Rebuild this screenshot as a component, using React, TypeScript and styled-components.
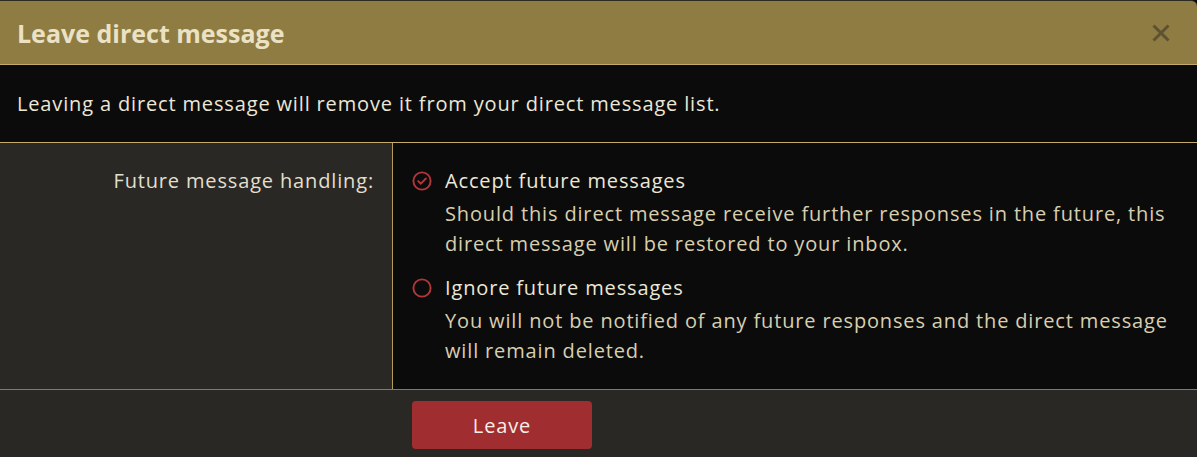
import React, { useState } from 'react';
import styled, { createGlobalStyle } from 'styled-components';

const colors = {
  header: '#8f7c42',
  headerText: '#ebe2c6',
  closeIcon: '#5e5232',
  goldLine: '#c4ab6a',
  goldDark: '#8f7b45',
  black: '#0b0b0b',
  panel: '#292824',
  text: '#ece7d6',
  muted: '#d8cfb0',
  red: '#b3363a',
  button: '#a02d30',
};

const GlobalStyle = createGlobalStyle`
  html, body {
    margin: 0;
    padding: 0;
    background: ${colors.panel};
  }
  body {
    font-family: 'Open Sans', 'Noto Sans', sans-serif;
  }
`;

type Option = {
  id: string;
  label: string;
  description: string;
};

const options: Option[] = [
  {
    id: 'accept',
    label: 'Accept future messages',
    description:
      'Should this direct message receive further responses in the future, this direct message will be restored to your inbox.',
  },
  {
    id: 'ignore',
    label: 'Ignore future messages',
    description:
      'You will not be notified of any future responses and the direct message will remain deleted.',
  },
];

const RadioIcon = ({ checked }: { checked: boolean }) => (
  <svg width='20' height='20' viewBox='0 0 20 20' fill='none'>
    <circle cx='10' cy='10' r='8.6' stroke={colors.red} strokeWidth='1.9' />
    {/* checkmark only on the selected option */}
    {checked && (
      <path
        d='M6.2 10.1 L8.9 12.7 L13.9 7.5'
        stroke={colors.red}
        strokeWidth='1.9'
        strokeLinecap='round'
        strokeLinejoin='round'
      />
    )}
  </svg>
);

export default function App() {
  const [selected, setSelected] = useState('accept');

  return (
    <>
      <GlobalStyle />
      <Modal>
        <Header>
          <Title>Leave direct message</Title>
          <CloseButton aria-label='Close'>
            <svg width='18' height='18' viewBox='0 0 18 18'>
              <path d='M1.5 1.5 L16.5 16.5 M16.5 1.5 L1.5 16.5' stroke={colors.closeIcon} strokeWidth='3' />
            </svg>
          </CloseButton>
        </Header>

        <Intro>Leaving a direct message will remove it from your direct message list.</Intro>

        <FormRow>
          <FieldLabel>Future message handling:</FieldLabel>
          <FieldBody>
            {options.map((opt) => (
              <OptionRow key={opt.id} onClick={() => setSelected(opt.id)}>
                <IconWrap>
                  <RadioIcon checked={selected === opt.id} />
                </IconWrap>
                <OptionText>
                  <OptionLabel>{opt.label}</OptionLabel>
                  <OptionDescription>{opt.description}</OptionDescription>
                </OptionText>
              </OptionRow>
            ))}
          </FieldBody>
        </FormRow>

        <Footer>
          <span />
          <ButtonCell>
            <LeaveButton type='button'>Leave</LeaveButton>
          </ButtonCell>
        </Footer>
      </Modal>
    </>
  );
}

const Modal = styled.section`
  width: 1197px;
  background: ${colors.black};
  color: ${colors.text};
  letter-spacing: 0.85px;
`;

const Header = styled.header`
  height: 65px;
  box-sizing: border-box;
  border-top: 1px solid #2d2a22;
  border-bottom: 1px solid ${colors.goldLine};
  border-radius: 0 6px 0 0;
  background: ${colors.header};
  display: flex;
  align-items: center;
  justify-content: space-between;
  padding: 0 27px 0 17px;
`;

const Title = styled.h1`
  margin: 0;
  font-size: 25px;
  font-weight: 700;
  letter-spacing: 0;
  color: ${colors.headerText};
`;

const CloseButton = styled.button`
  border: none;
  background: transparent;
  padding: 0;
  display: flex;
  cursor: pointer;
  margin-top: 1px;
`;

const Intro = styled.p`
  margin: 0;
  height: 78px;
  box-sizing: border-box;
  display: flex;
  align-items: center;
  padding: 0 17px;
  font-size: 20px;
  color: ${colors.text};
  border-bottom: 1px solid ${colors.goldLine};
`;

const FormRow = styled.div`
  display: grid;
  grid-template-columns: 393px 1fr;
  border-bottom: 1px solid ${colors.goldDark};
  font-size: 20px;
  line-height: 30px;
`;

const FieldLabel = styled.div`
  background: ${colors.panel};
  border-right: 1px solid #b49c5f;
  text-align: right;
  padding: 23px 18px 0 0;
  color: #e3dfcd;
`;

const FieldBody = styled.div`
  display: flex;
  flex-direction: column;
  gap: 14px;
  padding: 23px 20px 23px 19px;
`;

const OptionRow = styled.div`
  display: flex;
  gap: 13px;
  cursor: pointer;
`;

const IconWrap = styled.div`
  height: 30px;
  display: flex;
  align-items: center;
  flex-shrink: 0;
`;

const OptionText = styled.div`
  display: flex;
  flex-direction: column;
`;

const OptionLabel = styled.span`
  color: ${colors.text};
`;

const OptionDescription = styled.span`
  margin-top: 3px;
  color: ${colors.muted};
`;

const Footer = styled.footer`
  display: grid;
  grid-template-columns: 393px 1fr;
  background: ${colors.panel};
  padding: 11px 0 8px;
`;

const ButtonCell = styled.div`
  padding-left: 19px;
`;

const LeaveButton = styled.button`
  width: 180px;
  height: 48px;
  border: none;
  border-radius: 4px;
  background: ${colors.button};
  color: #f6efe8;
  font-family: inherit;
  font-size: 20px;
  letter-spacing: 0.85px;
  cursor: pointer;
`;
